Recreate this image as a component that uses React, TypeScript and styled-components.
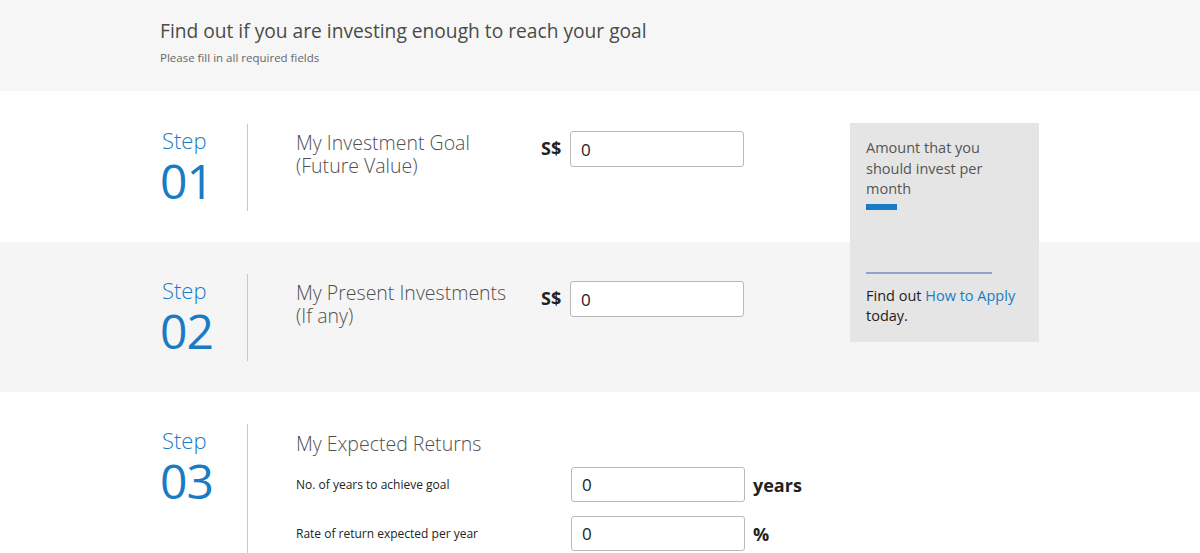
import React from "react";
import styled, { createGlobalStyle } from "styled-components";

const Global = createGlobalStyle`
  html, body { margin: 0; padding: 0; background: #ffffff; }
  body { font-family: "Open Sans", "Noto Sans", Arial, sans-serif; color: #333; }
  * { box-sizing: border-box; }
`;

const Page = styled.div`
  width: 1200px;
  position: relative;
`;

const Header = styled.header`
  background: #f6f6f6;
  height: 91px;
  padding: 17px 0 0 160px;
`;

const HeaderTitle = styled.h1`
  margin: 0;
  font-size: 19.2px;
  font-weight: 400;
  color: #4a4a4a;
  line-height: 28px;
`;

const HeaderSub = styled.p`
  margin: 5px 0 0;
  font-size: 11.5px;
  color: #666;
  line-height: 16px;
`;

const Band = styled.section<{ $grey?: boolean; $h: number; $top: number }>`
  background: ${(p) => (p.$grey ? "#f5f5f5" : "#ffffff")};
  height: ${(p) => p.$h}px;
  padding: ${(p) => p.$top}px 0 0 160px;
  overflow: hidden;
`;

const StepRow = styled.div`
  display: flex;
  align-items: flex-start;
`;

const StepBox = styled.div<{ $tall?: boolean }>`
  width: 88px;
  height: ${(p) => (p.$tall ? "140px" : "87px")};
  border-right: 1px solid #c8c8c8;
  display: flex;
  flex-direction: column;
  align-items: flex-start;
  padding-left: 2px;
  color: #1a7bc5;
`;

const StepWord = styled.span`
  font-size: 22px;
  font-weight: 300;
  line-height: 22px;
  margin-top: 5px;
`;

const StepNum = styled.span`
  font-size: 48px;
  font-weight: 400;
  line-height: 36px;
  letter-spacing: -1px;
  margin-top: 12px;
  margin-left: -2px;
`;

const Content = styled.div<{ $offset: number }>`
  padding: ${(p) => p.$offset}px 0 0 48px;
  display: grid;
  grid-template-columns: 245px 29px 174px auto;
  align-content: start;
  row-gap: 14px;
`;

const StepTitle = styled.div<{ $span?: boolean }>`
  grid-column: ${(p) => (p.$span ? "1 / 5" : "1 / 2")};
  margin-bottom: ${(p) => (p.$span ? "-2px" : "0")};
  font-size: 19.5px;
  font-weight: 300;
  color: #505050;
  line-height: 23px;
`;

const Currency = styled.span`
  font-size: 18px;
  font-weight: 700;
  color: #222;
  line-height: 36px;
  margin-top: -1px;
`;

const Input = styled.input`
  width: 174px;
  height: 36px;
  border: 1px solid #b9b9b9;
  border-radius: 3px;
  background: #fff;
  padding: 0 10px;
  font-family: inherit;
  font-size: 17px;
  color: #222;
  outline: none;
`;

const FieldLabel = styled.label`
  grid-column: 1 / 3;
  font-size: 12px;
  color: #222;
  align-self: center;
`;

const Unit = styled.span`
  font-size: 18px;
  font-weight: 700;
  color: #222;
  padding-left: 9px;
  align-self: center;
`;

const FieldInput = styled(Input)`
  grid-column: 3 / 4;
  margin-left: 1px;
  height: 35px;
`;

const SidePanel = styled.aside`
  position: absolute;
  left: 850px;
  top: 123px;
  width: 189px;
  height: 219px;
  background: #e5e5e5;
  padding: 15px 14px 0 16px;
  font-size: 14.5px;
  line-height: 20.5px;
`;

const PanelText = styled.p`
  margin: 0;
  color: #555;
`;

const BlueBar = styled.div`
  width: 31px;
  height: 6px;
  background: #1a7bc5;
  margin-top: 4px;
`;

const Rule = styled.div`
  width: 126px;
  height: 2px;
  background: #8ea3c9;
  margin-top: 62px;
`;

const ApplyText = styled.p`
  margin: 12px 0 0;
  color: #1e1e1e;
`;

const ApplyLink = styled.a`
  color: #1a7bc5;
  text-decoration: none;
`;

export default function App() {
  return (
    <Page>
      <Global />
      <Header>
        <HeaderTitle>Find out if you are investing enough to reach your goal</HeaderTitle>
        <HeaderSub>Please fill in all required fields</HeaderSub>
      </Header>

      <Band $h={151} $top={33}>
        <StepRow>
          <StepBox>
            <StepWord>Step</StepWord>
            <StepNum>01</StepNum>
          </StepBox>
          <Content $offset={7}>
            <StepTitle>
              My Investment Goal
              <br />
              (Future Value)
            </StepTitle>
            <Currency>S$</Currency>
            <Input defaultValue="0" />
          </Content>
        </StepRow>
      </Band>

      <Band $grey $h={150} $top={32}>
        <StepRow>
          <StepBox>
            <StepWord>Step</StepWord>
            <StepNum>02</StepNum>
          </StepBox>
          <Content $offset={7}>
            <StepTitle>
              My Present Investments
              <br />
              (If any)
            </StepTitle>
            <Currency>S$</Currency>
            <Input defaultValue="0" />
          </Content>
        </StepRow>
      </Band>

      <Band $h={161} $top={32}>
        <StepRow>
          <StepBox $tall>
            <StepWord>Step</StepWord>
            <StepNum>03</StepNum>
          </StepBox>
          <Content $offset={8}>
            <StepTitle $span>My Expected Returns</StepTitle>
            <FieldLabel>No. of years to achieve goal</FieldLabel>
            <FieldInput defaultValue="0" />
            <Unit>years</Unit>
            <FieldLabel>Rate of return expected per year</FieldLabel>
            <FieldInput defaultValue="0" />
            <Unit>%</Unit>
          </Content>
        </StepRow>
      </Band>

      <SidePanel>
        <PanelText>Amount that you should invest per month</PanelText>
        <BlueBar />
        <Rule />
        <ApplyText>
          Find out <ApplyLink href="#">How to Apply</ApplyLink> today.
        </ApplyText>
      </SidePanel>
    </Page>
  );
}
